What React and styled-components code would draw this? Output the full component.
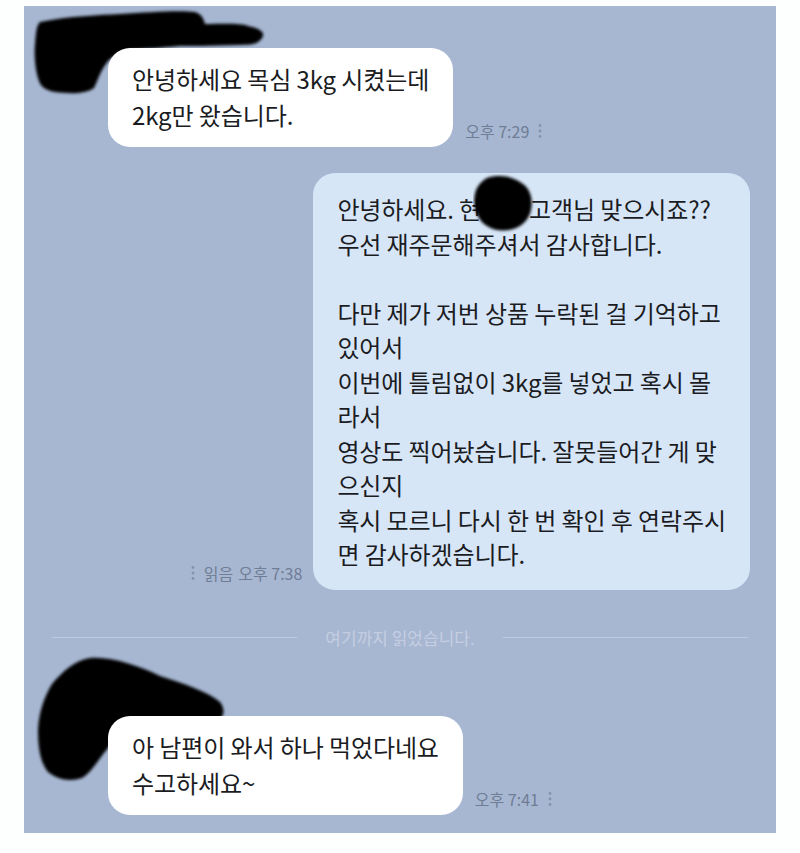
import React from 'react';
import styled, { createGlobalStyle } from 'styled-components';

const GlobalStyle = createGlobalStyle`
  html, body {
    margin: 0;
    padding: 0;
    background: #ffffff;
  }
  body {
    font-family: "Noto Sans CJK KR", "Noto Sans", sans-serif;
  }
`;

const Page = styled.div`
  width: 800px;
  height: 853px;
  padding-top: 6px;
  box-sizing: border-box;
  background: #fdfefe;
`;

const Panel = styled.div`
  position: relative;
  width: 752px;
  height: 827px;
  margin-left: 24px;
  padding-top: 42px;
  box-sizing: border-box;
  background: #a7b7d2;
  overflow: hidden;
  display: flex;
  flex-direction: column;
`;

const Row = styled.div`
  position: relative;
  display: flex;
  align-items: flex-end;
  gap: ${p => (p.mine ? '11px' : '12px')};
  justify-content: ${p => (p.mine ? 'flex-end' : 'flex-start')};
  padding-left: ${p => (p.mine ? '0' : '84px')};
  padding-right: ${p => (p.mine ? '26px' : '0')};
  margin-top: ${p => p.offset || 0}px;
`;

const Bubble = styled.div`
  position: relative;
  white-space: pre;
  font-size: 24px;
  letter-spacing: -0.1px;
  color: #1b1c1f;
  line-height: ${p => (p.mine ? '34.5px' : '36px')};
  padding: ${p => (p.mine ? '19px 24px 18px' : '13px 24px 14px')};
  border-radius: 22px;
  background: ${p => (p.mine ? '#d7e6f7' : '#ffffff')};
`;

const Line = styled.div`
  display: flex;
  align-items: baseline;
  min-height: 34.5px;
`;

const Hidden = styled.span`
  display: inline-block;
  width: ${p => p.w}px;
`;

const Meta = styled.div`
  display: flex;
  align-items: center;
  gap: 9px;
  padding-bottom: ${p => (p.mine ? '6px' : '5px')};
  font-size: 16px;
  line-height: 22px;
  color: #6f7d95;
  white-space: nowrap;
`;

const Read = styled.span`
  margin-right: 5px;
`;

const Divider = styled.div`
  display: flex;
  align-items: center;
  gap: 28px;
  height: 20px;
  margin-top: 38px;
  padding: 0 28px;
  font-size: 17px;
  color: #c5cee1;
  white-space: nowrap;

  &::before, &::after {
    content: '';
    flex: 1;
    height: 1px;
    background: #bfcadd;
  }
`;

const Blot = styled.svg`
  position: absolute;
  left: ${p => p.x}px;
  top: ${p => p.y}px;
  pointer-events: none;
`;

const Dots = () => (
  <svg width="4" height="16" viewBox="0 0 4 16">
    <circle cx="2" cy="2.5" r="1.4" fill="#8593aa" />
    <circle cx="2" cy="8" r="1.4" fill="#8593aa" />
    <circle cx="2" cy="13.5" r="1.4" fill="#8593aa" />
  </svg>
);

const Redaction = ({ x, y, w, h, d }) => (
  <Blot x={x} y={y} width={w} height={h} viewBox={`0 0 ${w} ${h}`}>
    <defs>
      <filter id="soft" x="-10%" y="-10%" width="120%" height="120%">
        <feGaussianBlur stdDeviation="1.4" />
      </filter>
    </defs>
    <path d={d} fill="#050505" filter="url(#soft)" />
  </Blot>
);

const blotTop =
  'M10 14 C40 8 70 7 90 6 C120 4 150 2 165 4 C172 6 174 12 175 16 C195 16 210 15 218 18 C230 20 236 25 232 30 C228 36 222 37 210 37 C180 38 160 38 150 38 C130 40 110 41 98 42 C86 46 80 50 76 56 C70 64 68 72 64 80 C56 86 40 86 25 84 C14 82 10 78 8 70 C5 60 4 45 5 36 C6 26 6 18 10 14 Z';

const blotBottom =
  'M60 6 C80 4 110 14 130 24 C155 32 178 40 190 50 C196 58 194 66 186 70 C165 74 125 72 100 74 C90 80 84 88 78 96 C68 108 62 120 52 126 C40 130 28 128 18 120 C10 110 8 95 8 78 C9 60 14 45 22 32 C32 20 45 8 60 6 Z';

const blotName =
  'M14 4 C26 0 40 2 50 10 C58 16 60 26 58 36 C56 46 48 54 36 56 C24 58 12 54 6 44 C0 34 0 22 4 14 C7 9 10 6 14 4 Z';

const reply = [
  '우선 재주문해주셔서 감사합니다.',
  '',
  '다만 제가 저번 상품 누락된 걸 기억하고',
  '있어서',
  '이번에 틀림없이 3kg를 넣었고 혹시 몰',
  '라서',
  '영상도 찍어놨습니다. 잘못들어간 게 맞',
  '으신지',
  '혹시 모르니 다시 한 번 확인 후 연락주시',
  '면 감사하겠습니다.',
];

export default function App() {
  return (
    <>
      <GlobalStyle />
      <Page>
        <Panel>
          <Row>
            <Redaction x={6} y={-40} w={240} h={90} d={blotTop} />
            <Bubble>{'안녕하세요 목심 3kg 시켰는데\n2kg만 왔습니다.'}</Bubble>
            <Meta>
              <span>오후 7:29</span>
              <Dots />
            </Meta>
          </Row>

          <Row mine offset={26}>
            <Meta mine>
              <Dots />
              <span>
                <Read>읽음</Read>오후 7:38
              </span>
            </Meta>
            <Bubble mine>
              <Line>
                <span>안녕하세요. 현</span>
                <Hidden w={48} />
                <span>고객님 맞으시죠??</span>
              </Line>
              {reply.map((text, i) => (
                <Line key={i}>{text || '\u00a0'}</Line>
              ))}
              <Redaction x={160} y={1} w={62} h={60} d={blotName} />
            </Bubble>
          </Row>

          <Divider>여기까지 읽었습니다.</Divider>

          <Row offset={68}>
            <Redaction x={6} y={-64} w={200} h={132} d={blotBottom} />
            <Bubble>{'아 남편이 와서 하나 먹었다네요\n수고하세요~'}</Bubble>
            <Meta>
              <span>오후 7:41</span>
              <Dots />
            </Meta>
          </Row>
        </Panel>
      </Page>
    </>
  );
}
